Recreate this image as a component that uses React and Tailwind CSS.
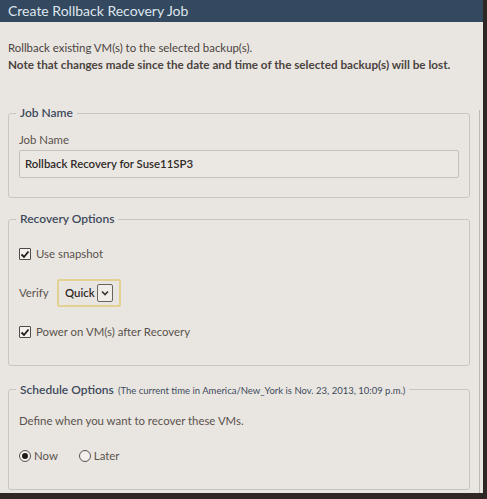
export default function App() {
  const font = { fontFamily: "Lato, 'Open Sans', sans-serif" };
  return (
    <div className="w-[487px] h-[499px] bg-[#2e2723] overflow-hidden" style={font}>
      <div className="w-[483px] h-[493px] bg-[#e9e6e2] flex flex-col">
        <div className="h-[22px] bg-[#34495f] text-[#dfe6ee] text-[14px] leading-[22px] pl-2">
          Create Rollback Recovery Job
        </div>
        <div className="flex-1 flex">
          <div className="flex-1 pl-2 pr-2">
            <div className="pt-[18px] text-[11.4px] leading-4 text-[#4b433e]">
              <p>Rollback existing VM(s) to the selected backup(s).</p>
              <p className="font-bold text-[11.7px]">Note that changes made since the date and time of the selected backup(s) will be lost.</p>
            </div>

            <fieldset className="mt-[33px] border border-[#c9c5c0] rounded-[3px] px-[10px] pb-[19px] w-[462px]">
              <legend className="-ml-[3px] px-[4px] text-[12px] leading-4 font-semibold text-[#3e4a5b]">Job Name</legend>
              <div className="text-[11.4px] leading-4 text-[#5a524c] mt-[11px]">Job Name</div>
              <div className="mt-[2px] h-[28px] border border-[#c4c0bb] rounded-[2px] bg-[#ebe8e4] px-[5px] flex items-center text-[11.4px] font-semibold text-[#2f2a27]">
                Rollback Recovery for Suse11SP3
              </div>
            </fieldset>

            <fieldset className="mt-[13px] border border-[#c9c5c0] rounded-[3px] px-[10px] pb-[25px] w-[462px]">
              <legend className="-ml-[3px] px-[4px] text-[12px] leading-4 font-semibold text-[#3e4a5b]">Recovery Options</legend>
              <label className="mt-[19px] h-4 flex items-center gap-[5px] text-[11.4px] text-[#5a524c]">
                <Check />
                Use snapshot
              </label>
              <div className="mt-[17px] flex items-center text-[11.4px] text-[#5a524c]">
                <span className="w-[38px]">Verify</span>
                <div className="h-[28px] w-[64px] border-2 border-[#e3d192] rounded-[2px] flex items-center pl-[6px] gap-[4px] text-[#2f2a27] font-semibold">
                  <span className="w-[28px]">Quick</span>
                  <span className="w-[16px] h-[18px] border border-[#6a635e] rounded-[2px] flex items-center justify-center bg-[#f0ede9]">
                    <svg width="8" height="6" viewBox="0 0 8 6">
                      <path d="M1 1.5 L4 4.5 L7 1.5" fill="none" stroke="#3a3532" strokeWidth="1.6" />
                    </svg>
                  </span>
                </div>
              </div>
              <label className="mt-[17px] h-4 flex items-center gap-[5px] text-[11.4px] text-[#5a524c]">
                <Check />
                Power on VM(s) after Recovery
              </label>
            </fieldset>

            <fieldset className="mt-[14px] border border-[#c9c5c0] rounded-[3px] px-[10px] pb-[25px] w-[462px]">
              <legend className="-ml-[3px] px-[4px] leading-4 text-[#3e4a5b]">
                <span className="text-[12px] font-semibold">Schedule Options</span>{" "}
                <span className="text-[9.5px]">(The current time in America/New_York is Nov. 23, 2013, 10:09 p.m.)</span>
              </legend>
              <div className="mt-[14px] leading-4 text-[11.4px] text-[#5a524c]">Define when you want to recover these VMs.</div>
              <div className="mt-[19px] h-4 flex items-center text-[11.4px] text-[#5a524c]">
                <label className="flex items-center gap-[3px]">
                  <span className="w-[12px] h-[12px] rounded-full border border-[#5a524c] flex items-center justify-center bg-[#f3f1ee]">
                    <span className="w-[6px] h-[6px] rounded-full bg-[#1f1b19]" />
                  </span>
                  Now
                </label>
                <label className="ml-[21px] flex items-center gap-[3px]">
                  <span className="w-[12px] h-[12px] rounded-full border border-[#5a524c] bg-[#f3f1ee]" />
                  Later
                </label>
              </div>
            </fieldset>
          </div>
          <div className="w-[4px] mt-[88px] border-l border-[#bdb9b4]" />
        </div>
      </div>
    </div>
  );
}

function Check() {
  return (
    <span className="w-[12px] h-[12px] border border-[#4f4843] rounded-[1px] bg-[#f3f1ee] flex items-center justify-center">
      <svg width="10" height="9" viewBox="0 0 10 9">
        <path d="M1.5 4.5 L4 7 L8.5 1.5" fill="none" stroke="#1f1b19" strokeWidth="1.8" />
      </svg>
    </span>
  );
}
